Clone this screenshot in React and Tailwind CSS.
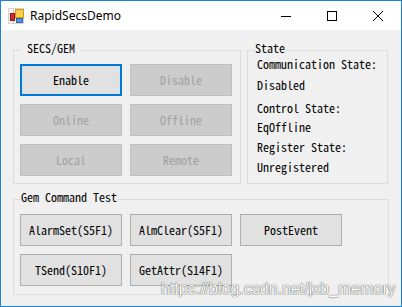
import React from "react";

const mono =
  "font-['Noto_Sans_Mono_CJK_SC','DejaVu_Sans_Mono',monospace] text-[12px] leading-[12px]";

function Btn({ children, variant = "normal" }) {
  const styles = {
    focus: "border-2 border-[#0078d7] bg-[#e1e1e1] text-black",
    disabled: "border border-[#bfbfbf] bg-[#cccccc] text-[#a0a0a0]",
    normal: "border border-[#adadad] bg-[#e1e1e1] text-black",
  };
  return (
    <div
      className={`w-[102px] h-[32px] pb-[1px] flex items-center justify-center ${mono} ${styles[variant]}`}
    >
      {children}
    </div>
  );
}

function Group({ label, className = "", children }) {
  return (
    <div className={`relative border border-[#dcdcdc] ${className}`}>
      <span
        className={`absolute left-[7px] top-[-9px] bg-[#f0f0f0] text-black whitespace-pre ${mono}`}
      >
        {label}
      </span>
      {children}
    </div>
  );
}

function AppIcon() {
  return (
    <svg width="16" height="16" viewBox="0 0 16 16">
      <rect x="0.5" y="0.5" width="15" height="15" fill="#f4f4f4" stroke="#d6d6d6" />
      <line x1="0" y1="5.5" x2="16" y2="5.5" stroke="#d0d0d0" />
      <line x1="0" y1="10.5" x2="16" y2="10.5" stroke="#d0d0d0" />
      <line x1="5.5" y1="0" x2="5.5" y2="16" stroke="#d0d0d0" />
      <rect x="2.5" y="5.5" width="4" height="7" fill="#c9302c" stroke="#8e1a16" />
      <rect x="7.5" y="1.5" width="8" height="8" fill="#f8cf4e" stroke="#d99412" />
      <rect x="8.5" y="10.5" width="6" height="4" fill="#5d93dc" stroke="#2f62b0" />
    </svg>
  );
}

export default function App() {
  return (
    <div className="relative w-[402px] h-[307px] border border-[#1883d7] flex flex-col overflow-hidden">
      {/* title bar */}
      <div className="h-[29px] bg-white flex items-center shrink-0">
        <div className="ml-[7px]">
          <AppIcon />
        </div>
        <span className="ml-[6px] font-['Noto_Sans',sans-serif] text-[12px] text-black leading-none">
          RapidSecsDemo
        </span>
        <div className="flex-1" />
        <div className="w-[46px] h-[29px] flex items-center justify-center">
          <svg width="10" height="10" viewBox="0 0 10 10">
            <rect x="0" y="5" width="10" height="1" fill="#000" />
          </svg>
        </div>
        <div className="w-[46px] h-[29px] flex items-center justify-center">
          <svg width="10" height="10" viewBox="0 0 10 10">
            <rect x="0.5" y="0.5" width="9" height="9" fill="none" stroke="#000" />
          </svg>
        </div>
        <div className="w-[46px] h-[29px] flex items-center justify-center">
          <svg width="10" height="10" viewBox="0 0 10 10">
            <path d="M0 0 L10 10 M10 0 L0 10" stroke="#000" strokeWidth="1" />
          </svg>
        </div>
      </div>

      {/* client area */}
      <div className="flex-1 bg-[#f0f0f0] pl-[12px] pt-[20px]">
        <div className="flex gap-[6px]">
          <Group label=" SECS/GEM " className="w-[228px] h-[134px] pt-[13px] pl-[6px]">
            <div className="grid grid-cols-[102px_102px] gap-[8px]">
              <Btn variant="focus">Enable</Btn>
              <Btn variant="disabled">Disable</Btn>
              <Btn variant="disabled">Online</Btn>
              <Btn variant="disabled">Offline</Btn>
              <Btn variant="disabled">Local</Btn>
              <Btn variant="disabled">Remote</Btn>
            </div>
          </Group>
          <Group label="State" className="w-[141px] h-[134px] pl-[9px]">
            <div className={`flex flex-col text-black ${mono}`}>
              <div className="mt-[7px] h-[12px]">Communication State:</div>
              <div className="mt-[9px] h-[12px]">Disabled</div>
              <div className="mt-[11px] h-[12px]">Control State:</div>
              <div className="mt-[7px] h-[12px]">EqOffline</div>
              <div className="mt-[8px] h-[12px]">Register State:</div>
              <div className="mt-[8px] h-[12px]">Unregistered</div>
            </div>
          </Group>
        </div>
        <Group label="Gem Command Test" className="mt-[15px] w-[376px] h-[96px] pt-[14px] pl-[6px]">
          <div className="flex flex-col gap-[8px]">
            <div className="flex gap-[8px]">
              <Btn>AlarmSet(S5F1)</Btn>
              <Btn>AlmClear(S5F1)</Btn>
              <Btn>PostEvent</Btn>
            </div>
            <div className="flex gap-[8px]">
              <Btn>TSend(S10F1)</Btn>
              <Btn>GetAttr(S14F1)</Btn>
            </div>
          </div>
        </Group>
      </div>

      {/* watermark */}
      <div className="absolute left-[160px] top-[278px] font-['Liberation_Sans',sans-serif] text-[16px] leading-[20px] text-white [text-shadow:0_0_1px_rgba(0,0,0,0.7),0_0_1px_rgba(0,0,0,0.5)] whitespace-nowrap">
        https://blog.csdn.net/jxb_memory
      </div>
    </div>
  );
}
